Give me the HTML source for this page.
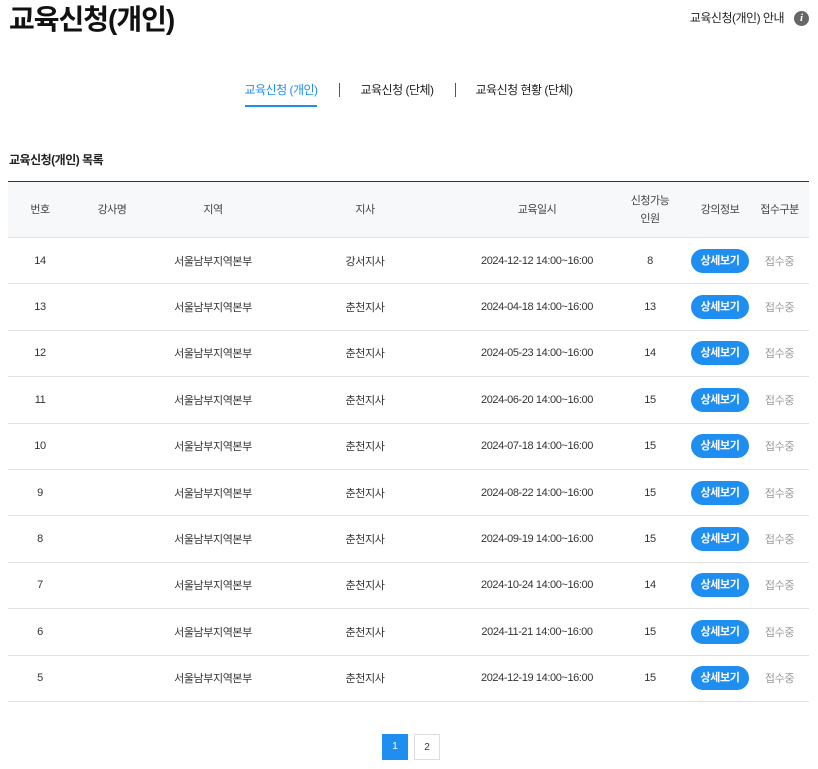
<!DOCTYPE html>
<html><head><meta charset="utf-8"><style>
*{margin:0;padding:0;box-sizing:border-box}
body{width:818px;height:769px;background:#fff;font-family:"Liberation Sans","Noto Sans CJK KR",sans-serif;color:#222;position:relative;overflow:hidden}
.abs{position:absolute;white-space:nowrap}
h1{position:absolute;left:9px;top:2px;font-size:28px;font-weight:700;letter-spacing:-1px;color:#111;line-height:36px}
.info{right:34px;top:9px;font-size:12px;color:#222;letter-spacing:-0.5px}
.ic{position:absolute;left:794px;top:11px;width:15px;height:15px;border-radius:50%;background:#666;color:#fff;font-size:11px;font-weight:700;font-style:italic;text-align:center;line-height:15px;font-family:"Liberation Serif",serif}
.tab{top:81px;font-size:12px;letter-spacing:-0.5px;transform:translateX(-50%)}
.sep{position:absolute;top:83px;width:1px;height:14px;background:#555}
.sub{left:9px;top:151px;font-size:12px;font-weight:700;letter-spacing:-0.5px}
table{position:absolute;left:8px;top:181px;width:801px;border-collapse:collapse;border-top:1px solid #333;table-layout:fixed}
th{height:56px;background:#f7f8fa;font-weight:400;font-size:11px;color:#444;border-bottom:1px solid #e2e2e2;line-height:18px;letter-spacing:-0.5px}
td{height:46.4px;text-align:center;font-size:11px;color:#333;border-bottom:1px solid #e2e2e2;letter-spacing:-0.4px}
.btn{display:inline-block;width:58px;height:24px;line-height:24px;border-radius:12px;background:#1f8ef1;color:#fff;font-weight:700;font-size:11px}
.g{color:#999;padding-right:8px}
th:last-child{padding-right:8px}
.pg{position:absolute;top:734px;width:26px;height:26px;text-align:center;line-height:26px;font-size:10px}
</style></head><body>
<h1>교육신청(개인)</h1>
<div class="abs info">교육신청(개인) 안내</div>
<div class="ic">i</div>
<div class="abs tab" style="left:281px;color:#1f8ef1">교육신청 (개인)</div>
<div style="position:absolute;left:245px;top:105px;width:72px;height:2px;background:#1f8ef1"></div>
<div class="sep" style="left:339px"></div>
<div class="abs tab" style="left:397px">교육신청 (단체)</div>
<div class="sep" style="left:455px"></div>
<div class="abs tab" style="left:524px">교육신청 현황 (단체)</div>
<div class="abs sub">교육신청(개인) 목록</div>
<table>
<colgroup><col style="width:64px"><col style="width:80px"><col style="width:122px"><col style="width:182px"><col style="width:162px"><col style="width:64px"><col style="width:76px"><col style="width:51px"></colgroup>
<tr><th>번호</th><th>강사명</th><th>지역</th><th>지사</th><th>교육일시</th><th>신청가능<br>인원</th><th>강의정보</th><th>접수구분</th></tr>
<tr><td>14</td><td></td><td>서울남부지역본부</td><td>강서지사</td><td>2024-12-12 14:00~16:00</td><td>8</td><td><span class="btn">상세보기</span></td><td class="g">접수중</td></tr>
<tr><td>13</td><td></td><td>서울남부지역본부</td><td>춘천지사</td><td>2024-04-18 14:00~16:00</td><td>13</td><td><span class="btn">상세보기</span></td><td class="g">접수중</td></tr>
<tr><td>12</td><td></td><td>서울남부지역본부</td><td>춘천지사</td><td>2024-05-23 14:00~16:00</td><td>14</td><td><span class="btn">상세보기</span></td><td class="g">접수중</td></tr>
<tr><td>11</td><td></td><td>서울남부지역본부</td><td>춘천지사</td><td>2024-06-20 14:00~16:00</td><td>15</td><td><span class="btn">상세보기</span></td><td class="g">접수중</td></tr>
<tr><td>10</td><td></td><td>서울남부지역본부</td><td>춘천지사</td><td>2024-07-18 14:00~16:00</td><td>15</td><td><span class="btn">상세보기</span></td><td class="g">접수중</td></tr>
<tr><td>9</td><td></td><td>서울남부지역본부</td><td>춘천지사</td><td>2024-08-22 14:00~16:00</td><td>15</td><td><span class="btn">상세보기</span></td><td class="g">접수중</td></tr>
<tr><td>8</td><td></td><td>서울남부지역본부</td><td>춘천지사</td><td>2024-09-19 14:00~16:00</td><td>15</td><td><span class="btn">상세보기</span></td><td class="g">접수중</td></tr>
<tr><td>7</td><td></td><td>서울남부지역본부</td><td>춘천지사</td><td>2024-10-24 14:00~16:00</td><td>14</td><td><span class="btn">상세보기</span></td><td class="g">접수중</td></tr>
<tr><td>6</td><td></td><td>서울남부지역본부</td><td>춘천지사</td><td>2024-11-21 14:00~16:00</td><td>15</td><td><span class="btn">상세보기</span></td><td class="g">접수중</td></tr>
<tr><td>5</td><td></td><td>서울남부지역본부</td><td>춘천지사</td><td>2024-12-19 14:00~16:00</td><td>15</td><td><span class="btn">상세보기</span></td><td class="g">접수중</td></tr>
</table>
<div class="pg" style="left:382px;background:#1f8ef1;color:#fff">1</div>
<div class="pg" style="left:414px;border:1px solid #ddd;color:#333">2</div>
</body></html>
